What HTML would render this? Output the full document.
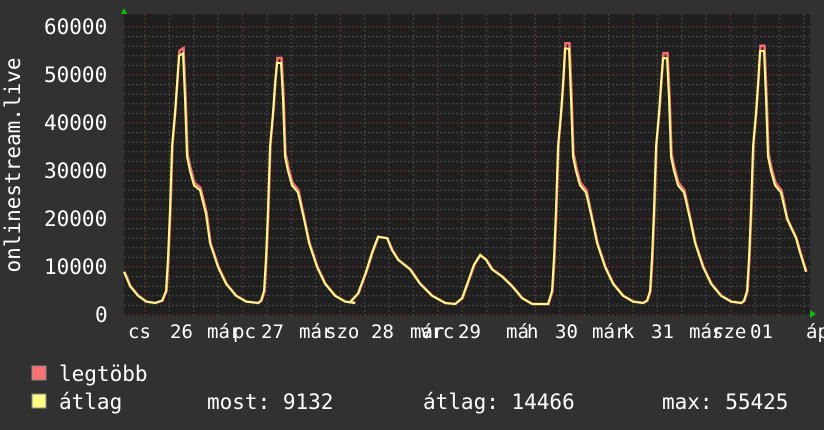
<!DOCTYPE html>
<html><head><meta charset="utf-8"><style>
html,body{margin:0;padding:0;background:#313131;}
body{width:824px;height:430px;position:relative;overflow:hidden;font-family:"DejaVu Sans Mono","Liberation Mono",monospace;color:#fff;}
.t{position:absolute;font-size:21px;line-height:20px;white-space:pre;}
.x{position:absolute;font-size:19px;line-height:20px;white-space:pre;top:322px;}
</style></head><body>
<svg width="824" height="430" style="position:absolute;left:0;top:0">
<rect x="124" y="14" width="686" height="302" fill="#1f1f1f"/>
<g id="grid"></g>
<path id="mx" fill="none" stroke="#ff7070" stroke-width="2.5"/>
<path id="av" fill="none" stroke="#ffff80" stroke-width="2"/>
<polygon points="121,14 127,14 124,8" fill="#00c000"/>
<polygon points="810,310 810,318 816,314" fill="#00c000"/>
<rect x="32" y="366" width="14" height="14" fill="#ff7070" stroke="#888" stroke-width="1"/>
<rect x="32" y="394" width="14" height="14" fill="#ffff80" stroke="#888" stroke-width="1"/>
<text x="0" y="0" transform="translate(20,165) rotate(-90)" fill="#fff" font-size="21" text-anchor="middle" font-family="DejaVu Sans Mono,monospace">onlinestream.live</text>
</svg>
<div class="t" style="left:44px;top:17px">60000</div>
<div class="t" style="left:44px;top:65px">50000</div>
<div class="t" style="left:44px;top:113px">40000</div>
<div class="t" style="left:44px;top:161px">30000</div>
<div class="t" style="left:44px;top:209px">20000</div>
<div class="t" style="left:44px;top:257px">10000</div>
<div class="t" style="left:95px;top:305px">0</div>
<div class="x" style="left:128px">cs</div>
<div class="x" style="left:170px">26</div>
<div class="x" style="left:207px">már</div>
<div class="x" style="left:233px">pc</div>
<div class="x" style="left:261px">27</div>
<div class="x" style="left:299px">már</div>
<div class="x" style="left:325px">szo</div>
<div class="x" style="left:371px">28</div>
<div class="x" style="left:410px">már</div>
<div class="x" style="left:420px">vrc</div>
<div class="x" style="left:458px">29</div>
<div class="x" style="left:506px">má</div>
<div class="x" style="left:527px">h</div>
<div class="x" style="left:555px">30</div>
<div class="x" style="left:592px">már</div>
<div class="x" style="left:623px">k</div>
<div class="x" style="left:651px">31</div>
<div class="x" style="left:689px">már</div>
<div class="x" style="left:712px">sze</div>
<div class="x" style="left:750px">01</div>
<div class="x" style="left:806px">áp</div>
<div class="t" style="left:59px;top:364px">legtöbb</div>
<div class="t" style="left:59px;top:392px">átlag</div>
<div class="t" style="left:207px;top:392px">most: 9132</div>
<div class="t" style="left:423px;top:392px">átlag: 14466</div>
<div class="t" style="left:662px;top:392px">max: 55425</div>
<script>
var g=document.getElementById('grid'),s='';
for(var i=0;i<=30;i++){var y=315-i*9.6;var maj=i%5==0;
s+='<line x1="124" x2="810" y1="'+y+'" y2="'+y+'" stroke="'+(maj?'#6a3a3a':'#4a4a4a')+'" stroke-dasharray="2,2"/>';}
for(var k=-1;k<30;k++){var x=145+k*24.4;if(x<125||x>809)continue;var maj=(k%4==0);
s+='<line y1="14" y2="318" x1="'+x+'" x2="'+x+'" stroke="'+(maj?'#6a3a3a':'#4a4a4a')+'" stroke-dasharray="2,2"/>';}
g.innerHTML=s;
function Y(v){return 315-v*0.0048;}
var pts=[[124,9000],[130,6000],[138,4000],[146,2800],[155,2500],[162,3000],[166,5000],[168,12000],[170,22000],[172,35000],[175,42000],[177,48000],[179,54000],[183,54500],[185,45000],[187,33000],[190,30000],[194,27000],[200,26000],[206,21000],[210,15000],[218,10000],[226,6500],[236,4000],[246,2800],[258,2500]];
function day(p,H){return [[p-18,3000],[p-15,5000],[p-13,12000],[p-11,22000],[p-9,35000],[p-6,42000],[p-4,48000],[p-2,H],[p+2,H],[p+4,45000],[p+6,33000],[p+9,30000],[p+13,27000],[p+19,25500],[p+25,20000],[p+30,15000],[p+38,10000],[p+46,6500],[p+56,4000],[p+66,2800],[p+76,2500]];}
pts=pts.concat(day(279,52500));
pts=pts.concat([[350,2700],[358,4500],[366,9000],[372,13000],[378,16300],[387,16000],[392,13500],[398,11500],[410,9500],[420,6500],[432,4000],[445,2500],[455,2300],[462,3500],[468,7000],[474,10500],[480,12500],[486,11500],[492,9500],[502,8000],[512,6000],[522,3500],[532,2300],[548,2300]]);
pts=pts.concat(day(567,55500));
pts=pts.concat(day(665,53500));
var d3=day(762,55000);d3=d3.filter(function(a){return a[0]<=790});
pts=pts.concat(d3.concat([[796,16000],[800,13000],[806,9000]]));
document.getElementById('av').setAttribute('d',pts.map(function(p,i){return (i?'L':'M')+p[0]+','+Y(p[1]).toFixed(1)}).join(''));
var m=pts.map(function(p,i){var v=p[1]>20000?p[1]*1.02:p[1];return (i?'L':'M')+(p[0]+0.5)+','+Y(v).toFixed(1)}).join('');
document.getElementById('mx').setAttribute('d',m);
</script>
</body></html>
